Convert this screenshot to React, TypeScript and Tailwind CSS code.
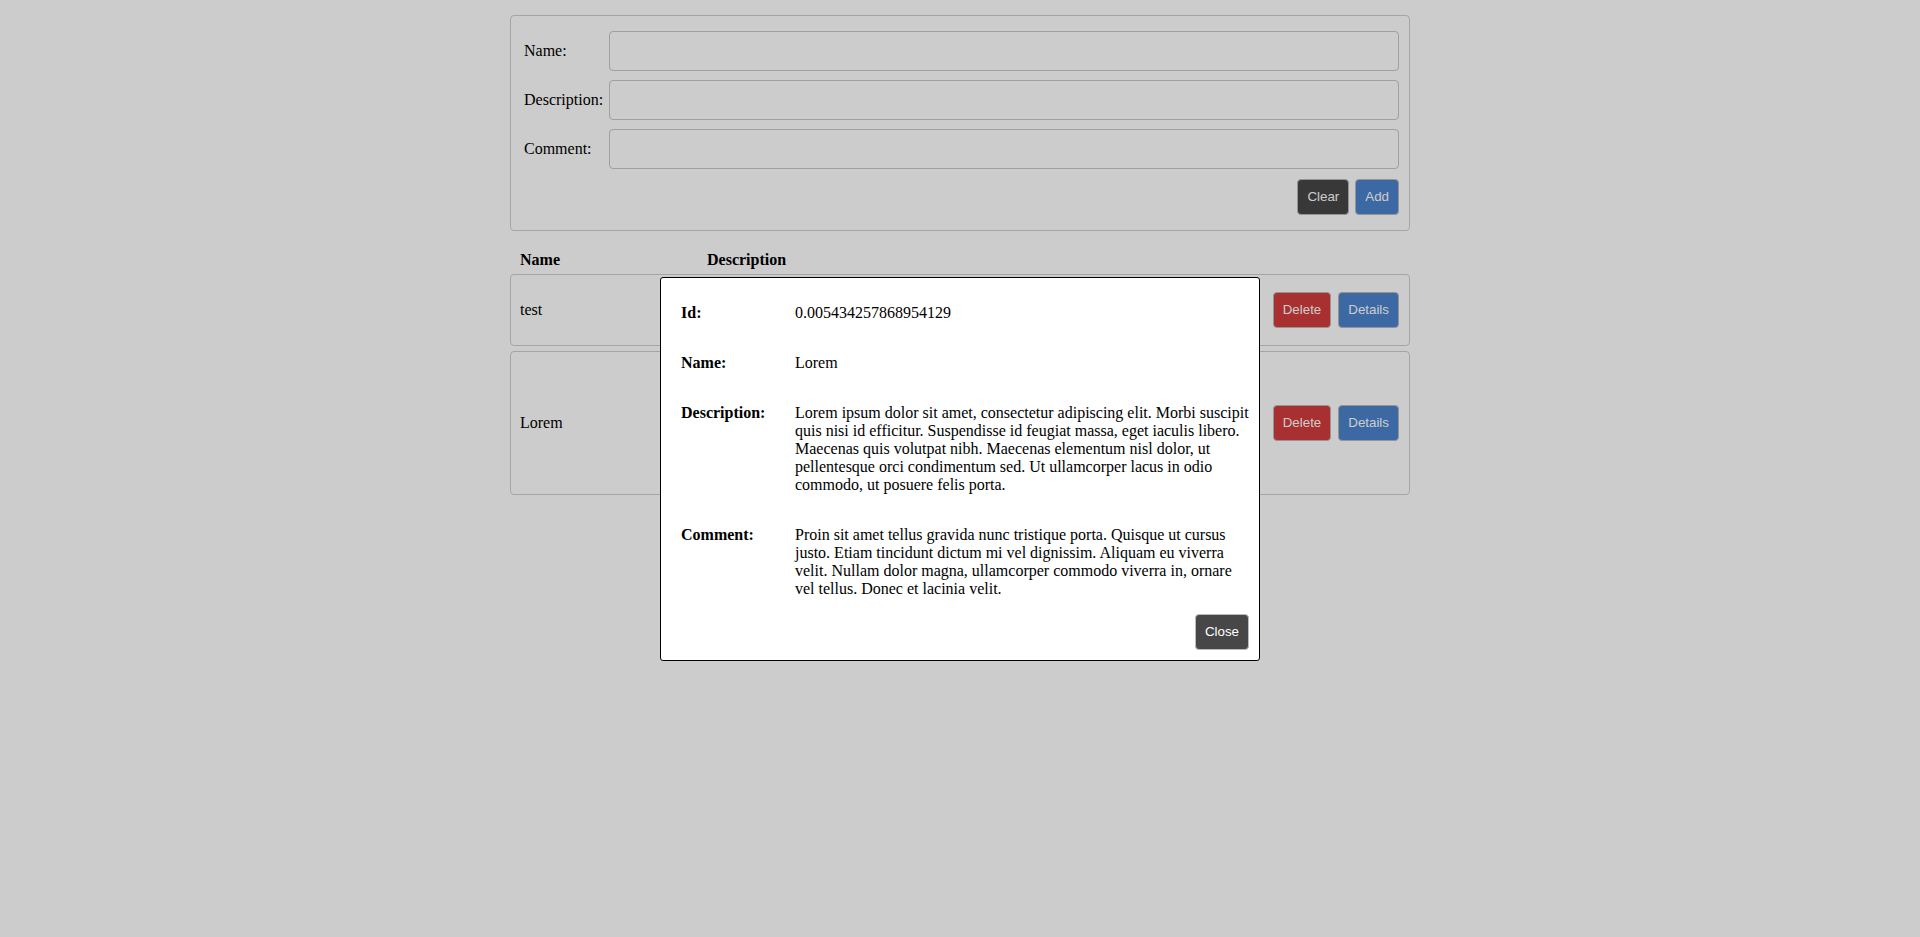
import React from "react";

const serif = "font-['Liberation_Serif','Times_New_Roman',serif]";
const btn =
  "h-9 px-[9px] rounded-[4px] border border-[#bbbbbb] text-white text-[13.333px] font-['Liberation_Sans',Arial,sans-serif] leading-none";

// descriptions of the rows sit under the modal, so only the names show
const items = [
  { name: "test", rowClass: "h-[72px]" },
  { name: "Lorem", rowClass: "h-[144px]" },
];

function Field({ label }: { label: string }) {
  return (
    <div className="flex items-center">
      <label className="w-[85px] shrink-0">{label}</label>
      <input className="h-10 flex-1 rounded-[4px] border border-[#c8c8c8] bg-white px-2 outline-none" />
    </div>
  );
}

function DetailRow({ label, children }: { label: string; children: React.ReactNode }) {
  return (
    <div className="grid grid-cols-[114px_1fr] py-4 pl-[10px]">
      <div className="font-bold">{label}</div>
      <div>{children}</div>
    </div>
  );
}

export default function App() {
  return (
    <div className={`min-h-screen bg-white text-black text-[16px] leading-[normal] ${serif}`}>
      <div className="mx-auto w-[900px] pt-[15px]">
        <form className="rounded-[4px] border border-[#cfcfcf] pt-[15px] pb-[15px] pl-[13px] pr-[10px]">
          <div className="flex flex-col gap-[9px]">
            <Field label="Name:" />
            <Field label="Description:" />
            <Field label="Comment:" />
          </div>
          <div className="mt-[10px] flex justify-end gap-[6px]">
            <button type="button" className={`${btn} bg-[#474747]`}>Clear</button>
            <button type="button" className={`${btn} bg-[#4c83ce]`}>Add</button>
          </div>
        </form>

        <div className="flex px-[10px] pt-[20px] pb-[5px] font-bold">
          <div className="w-[187px]">Name</div>
          <div>Description</div>
        </div>

        <div className="flex flex-col gap-[5px]">
          {items.map((item) => (
            <div
              key={item.name}
              className={`flex items-center rounded-[4px] border border-[#cfcfcf] pl-[9px] pr-[10px] ${item.rowClass}`}
            >
              <div className="w-[187px] shrink-0">{item.name}</div>
              <div className="ml-auto flex gap-[7px]">
                <button type="button" className={`${btn} bg-[#d23c3c]`}>Delete</button>
                <button type="button" className={`${btn} bg-[#4c83ce]`}>Details</button>
              </div>
            </div>
          ))}
        </div>
      </div>

      <div className="fixed inset-0 flex items-center justify-center bg-black/20">
        <div className="w-[600px] rounded-[3px] border border-black bg-white p-[10px]">
          <DetailRow label="Id:">0.005434257868954129</DetailRow>
          <DetailRow label="Name:">Lorem</DetailRow>
          <DetailRow label="Description:">
            Lorem ipsum dolor sit amet, consectetur adipiscing elit. Morbi suscipit quis nisi id efficitur.
            Suspendisse id feugiat massa, eget iaculis libero. Maecenas quis volutpat nibh. Maecenas elementum
            nisl dolor, ut pellentesque orci condimentum sed. Ut ullamcorper lacus in odio commodo, ut posuere
            felis porta.
          </DetailRow>
          <DetailRow label="Comment:">
            Proin sit amet tellus gravida nunc tristique porta. Quisque ut cursus justo. Etiam tincidunt dictum mi
            vel dignissim. Aliquam eu viverra velit. Nullam dolor magna, ullamcorper commodo viverra in, ornare vel
            tellus. Donec et lacinia velit.
          </DetailRow>
          <div className="flex justify-end">
            <button type="button" className={`${btn} bg-[#474747]`}>Close</button>
          </div>
        </div>
      </div>
    </div>
  );
}
